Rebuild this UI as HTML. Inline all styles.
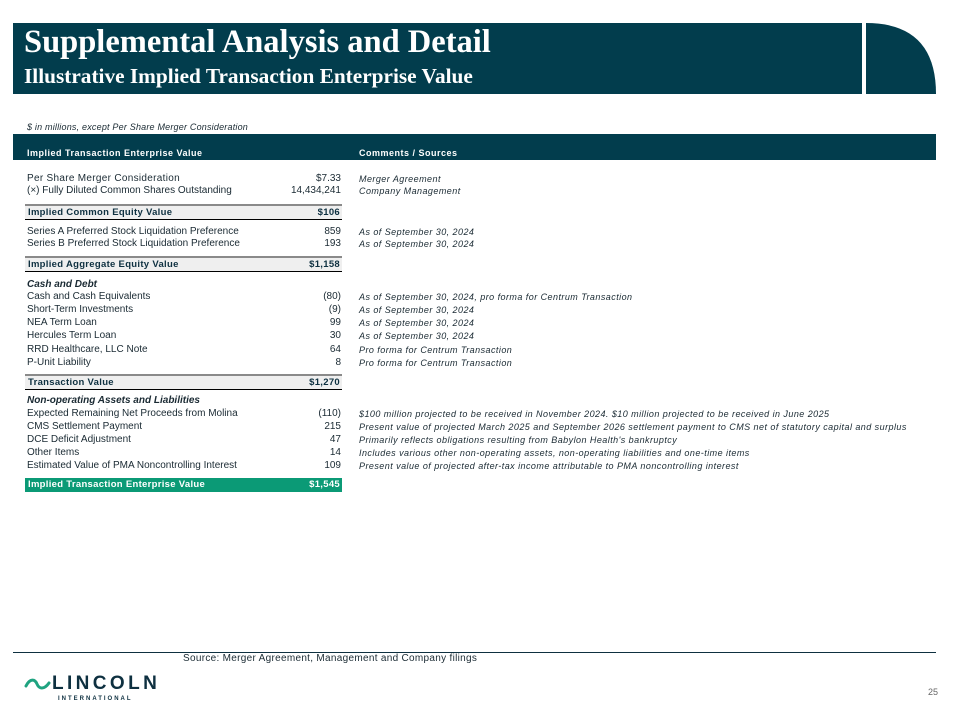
<!DOCTYPE html>
<html><head><meta charset="utf-8"><style>
body{margin:0;width:960px;height:720px;background:#fff;position:relative;overflow:hidden;font-family:"Liberation Sans",Arial,sans-serif;color:#1a2a33}
.a{position:absolute;white-space:nowrap}
.t{font-size:10px;line-height:12px}
.r{text-align:right;width:120px;left:221px}
.c{left:359px;font-style:italic;font-size:9px;letter-spacing:0.45px}
.box{position:absolute;left:25px;width:317px;height:13px;background:#efefef;border-top:2px solid #8a8a8a;border-bottom:1.5px solid #000;font-weight:bold;font-size:9.5px;line-height:13px;color:#0e3040;letter-spacing:0.3px}
.box span{position:absolute;left:3px}.box b{position:absolute;right:2px}
</style></head><body>
<div class="a" style="left:13px;top:23px;width:849px;height:71px;background:#023d4d"></div>
<svg class="a" style="left:866px;top:23px" width="71" height="72"><path d="M0,0 Q70,0 70,71 L0,71 Z" fill="#023d4d"/></svg>
<div class="a" style="left:24px;top:24px;color:#fff;font-family:'Liberation Serif',serif;font-size:32.5px;font-weight:bold;letter-spacing:0px">Supplemental Analysis and Detail</div>
<div class="a" style="left:24px;top:64px;color:#fff;font-family:'Liberation Serif',serif;font-size:21.3px;font-weight:bold">Illustrative Implied Transaction Enterprise Value</div>
<div class="a" style="left:27px;top:122px;font-size:9px;font-style:italic;letter-spacing:0.2px">$ in millions, except Per Share Merger Consideration</div>
<div class="a" style="left:13px;top:134px;width:923px;height:26px;background:#023d4d"></div>
<div class="a" style="left:27px;top:148px;color:#fff;font-weight:bold;font-size:9px;letter-spacing:0.5px">Implied Transaction Enterprise Value</div>
<div class="a" style="left:359px;top:148px;color:#fff;font-weight:bold;font-size:9px;letter-spacing:0.5px">Comments / Sources</div>

<div class="a t" style="left:27px;top:173px;letter-spacing:0.3px">Per Share Merger Consideration</div><div class="a t r" style="top:173px">$7.33</div><div class="a t c" style="top:173px">Merger Agreement</div>
<div class="a t" style="left:27px;top:185px">(×) Fully Diluted Common Shares Outstanding</div><div class="a t r" style="top:185px">14,434,241</div><div class="a t c" style="top:185px">Company Management</div>
<div class="box" style="top:204px"><span>Implied Common Equity Value</span><b>$106</b></div>
<div class="a t" style="left:27px;top:226px">Series A Preferred Stock Liquidation Preference</div><div class="a t r" style="top:226px">859</div><div class="a t c" style="top:226px">As of September 30, 2024</div>
<div class="a t" style="left:27px;top:238px">Series B Preferred Stock Liquidation Preference</div><div class="a t r" style="top:238px">193</div><div class="a t c" style="top:238px">As of September 30, 2024</div>
<div class="box" style="top:256px"><span>Implied Aggregate Equity Value</span><b>$1,158</b></div>
<div class="a t" style="left:27px;top:279px;font-style:italic;font-weight:bold">Cash and Debt</div>
<div class="a t" style="left:27px;top:291px">Cash and Cash Equivalents</div><div class="a t r" style="top:291px">(80)</div><div class="a t c" style="top:291px">As of September 30, 2024, pro forma for Centrum Transaction</div>
<div class="a t" style="left:27px;top:304px">Short-Term Investments</div><div class="a t r" style="top:304px">(9)</div><div class="a t c" style="top:304px">As of September 30, 2024</div>
<div class="a t" style="left:27px;top:317px">NEA Term Loan</div><div class="a t r" style="top:317px">99</div><div class="a t c" style="top:317px">As of September 30, 2024</div>
<div class="a t" style="left:27px;top:330px">Hercules Term Loan</div><div class="a t r" style="top:330px">30</div><div class="a t c" style="top:330px">As of September 30, 2024</div>
<div class="a t" style="left:27px;top:344px">RRD Healthcare, LLC Note</div><div class="a t r" style="top:344px">64</div><div class="a t c" style="top:344px">Pro forma for Centrum Transaction</div>
<div class="a t" style="left:27px;top:357px">P-Unit Liability</div><div class="a t r" style="top:357px">8</div><div class="a t c" style="top:357px">Pro forma for Centrum Transaction</div>
<div class="box" style="top:374px"><span>Transaction Value</span><b>$1,270</b></div>
<div class="a t" style="left:27px;top:395px;font-style:italic;font-weight:bold">Non-operating Assets and Liabilities</div>
<div class="a t" style="left:27px;top:408px">Expected Remaining Net Proceeds from Molina</div><div class="a t r" style="top:408px">(110)</div><div class="a t c" style="top:408px">$100 million projected to be received in November 2024. $10 million projected to be received in June 2025</div>
<div class="a t" style="left:27px;top:421px">CMS Settlement Payment</div><div class="a t r" style="top:421px">215</div><div class="a t c" style="top:421px">Present value of projected March 2025 and September 2026 settlement payment to CMS net of statutory capital and surplus</div>
<div class="a t" style="left:27px;top:434px">DCE Deficit Adjustment</div><div class="a t r" style="top:434px">47</div><div class="a t c" style="top:434px">Primarily reflects obligations resulting from Babylon Health's bankruptcy</div>
<div class="a t" style="left:27px;top:447px">Other Items</div><div class="a t r" style="top:447px">14</div><div class="a t c" style="top:447px">Includes various other non-operating assets, non-operating liabilities and one-time items</div>
<div class="a t" style="left:27px;top:460px">Estimated Value of PMA Noncontrolling Interest</div><div class="a t r" style="top:460px">109</div><div class="a t c" style="top:460px">Present value of projected after-tax income attributable to PMA noncontrolling interest</div>
<div class="box" style="top:478px;background:#0b9a76;border:none;height:14px;color:#fff"><span>Implied Transaction Enterprise Value</span><b>$1,545</b></div>

<div class="a" style="left:13px;top:652px;width:923px;height:1px;background:#0e3040"></div>
<div class="a" style="left:183px;top:653px;font-size:10px;letter-spacing:0.3px">Source: Merger Agreement, Management and Company filings</div>
<svg class="a" style="left:24px;top:678px" width="28" height="14"><path d="M2,8 C6,0 11,1 13,6 C15,11 20,12 25,5" fill="none" stroke="#1fa380" stroke-width="3" stroke-linecap="round"/></svg>
<div class="a" style="left:52px;top:673px;font-size:19px;font-weight:bold;letter-spacing:3.4px;color:#0e3040">LINCOLN</div>
<div class="a" style="left:58px;top:696px;font-size:6px;font-weight:bold;letter-spacing:2px;color:#0e3040">INTERNATIONAL</div>
<div class="a" style="left:928px;top:687px;font-size:9px;color:#666">25</div>
</body></html>
